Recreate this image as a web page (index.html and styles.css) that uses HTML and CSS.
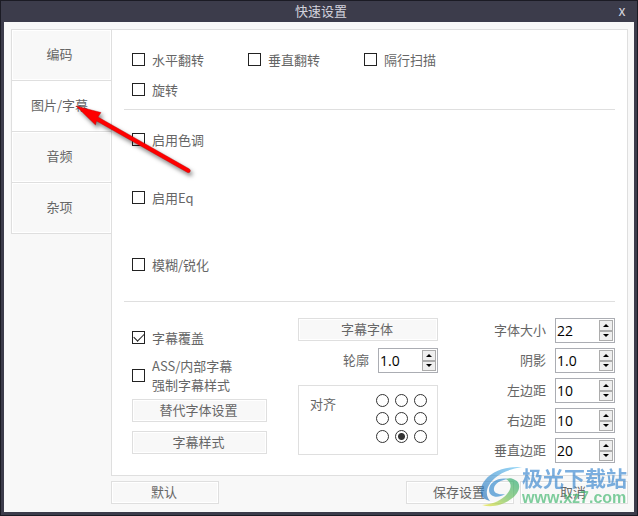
FILE: index.html
```html
<!DOCTYPE html>
<html lang="zh-CN">
<head>
<meta charset="utf-8">
<meta name="viewport" content="width=device-width, initial-scale=1">
<title>快速设置</title>
<link rel="stylesheet" href="styles.css">
</head>
<body>
<div class="window">
  <header class="titlebar">
    <h1 class="title">快速设置</h1>
    <button class="close" type="button">x</button>
  </header>
  <form class="content">
    <nav class="tabs">
      <button class="tab" type="button">编码</button>
      <button class="tab active" type="button">图片/字幕</button>
      <button class="tab" type="button">音频</button>
      <button class="tab" type="button">杂项</button>
    </nav>
    <main class="panel">
      <section class="group transform">
        <label class="check"><input type="checkbox"><span>水平翻转</span></label>
        <label class="check"><input type="checkbox"><span>垂直翻转</span></label>
        <label class="check"><input type="checkbox"><span>隔行扫描</span></label>
        <label class="check"><input type="checkbox"><span>旋转</span></label>
      </section>
      <section class="group filters">
        <label class="check"><input type="checkbox"><span>启用色调</span></label>
        <label class="check"><input type="checkbox"><span>启用Eq</span></label>
        <label class="check"><input type="checkbox"><span>模糊/锐化</span></label>
      </section>
      <section class="subtitles">
        <div class="column options">
          <label class="check"><input type="checkbox" checked><span>字幕覆盖</span></label>
          <label class="check"><input type="checkbox"><span>ASS/内部字幕<br>强制字幕样式</span></label>
          <button class="btn" type="button">替代字体设置</button>
          <button class="btn" type="button">字幕样式</button>
        </div>
        <div class="column font">
          <button class="btn" type="button">字幕字体</button>
          <div class="field">
            <label for="outline">轮廓</label>
            <div class="spinner"><input id="outline" type="number" step="0.1" value="1.0"><div class="steps"><button class="step up" type="button"></button><button class="step down" type="button"></button></div></div>
          </div>
          <fieldset class="align">
            <span class="align-label" id="align-label">对齐</span>
            <div class="radios" role="radiogroup" aria-labelledby="align-label">
              <input type="radio" name="align" aria-label="左上"><input type="radio" name="align" aria-label="上"><input type="radio" name="align" aria-label="右上">
              <input type="radio" name="align" aria-label="左"><input type="radio" name="align" aria-label="中"><input type="radio" name="align" aria-label="右">
              <input type="radio" name="align" aria-label="左下"><input type="radio" name="align" aria-label="下" checked><input type="radio" name="align" aria-label="右下">
            </div>
          </fieldset>
        </div>
        <div class="column metrics">
          <div class="field">
            <label for="size">字体大小</label>
            <div class="spinner"><input id="size" type="number" value="22"><div class="steps"><button class="step up" type="button"></button><button class="step down" type="button"></button></div></div>
          </div>
          <div class="field">
            <label for="shadow">阴影</label>
            <div class="spinner"><input id="shadow" type="number" step="0.1" value="1.0"><div class="steps"><button class="step up" type="button"></button><button class="step down" type="button"></button></div></div>
          </div>
          <div class="field">
            <label for="left">左边距</label>
            <div class="spinner"><input id="left" type="number" value="10"><div class="steps"><button class="step up" type="button"></button><button class="step down" type="button"></button></div></div>
          </div>
          <div class="field">
            <label for="right">右边距</label>
            <div class="spinner"><input id="right" type="number" value="10"><div class="steps"><button class="step up" type="button"></button><button class="step down" type="button"></button></div></div>
          </div>
          <div class="field">
            <label for="vertical">垂直边距</label>
            <div class="spinner"><input id="vertical" type="number" value="20"><div class="steps"><button class="step up" type="button"></button><button class="step down" type="button"></button></div></div>
          </div>
        </div>
      </section>
    </main>
    <footer class="actions">
      <button class="btn reset" type="button">默认</button>
      <button class="btn" type="button">保存设置</button>
      <button class="btn" type="button">取消</button>
    </footer>
  </form>

  <svg class="pointer" width="130" height="90" viewBox="0 0 130 90" aria-hidden="true">
    <path d="M6 12 31 18.500 28 23 119.500 75Q121 76.500 120 78Q119 79 117.500 78.500L26.500 27 25.500 31Z" fill="#fe0000" stroke="#b00808" stroke-width=".4"/>
  </svg>

  <div class="watermark">
    <svg class="mark" width="42" height="42" viewBox="4 3 42 42" aria-hidden="true">
      <defs>
        <linearGradient id="blue" x1="0" y1="1" x2="1" y2="0"><stop offset="0" stop-color="#1c68b4"/><stop offset="1" stop-color="#62c4f4"/></linearGradient>
        <linearGradient id="green" x1="0" y1="1" x2="1" y2="0"><stop offset="0" stop-color="#f0e428"/><stop offset=".5" stop-color="#67bd55"/><stop offset="1" stop-color="#18a36d"/></linearGradient>
      </defs>
      <path d="M46 4C30 3 14 8 7 20C2 29 5 36 14 38C8 31 11 22 19 15C26 9 35 6 46 4Z" fill="url(#blue)"/>
      <path d="M32 16C23 14 13 19 13 27C13 34 22 36 29 31C22 32 17 30 18 25C19 20 25 17 32 16Z" fill="#2d86cc"/>
      <path d="M39 17C46 20 44 30 35 36C27 42 16 45 6 42C18 41 26 37 31 31C36 25 36 20 30 16C33 15 36 15 39 17Z" fill="url(#green)"/>
    </svg>
    <div class="brand">
      <span class="brand-name">极光下载站</span>
      <span class="brand-url">www.xz7.com</span>
    </div>
  </div>
</div>
</body>
</html>
```
FILE: styles.css
```css
:root {
  --frame: #3c3c4b;
  --edge: #1b1b24;
  --line: #dfdfdf;
  --surface: #f8f8f8;
  --text: #666;
}

* { box-sizing: border-box; }

body {
  margin: 0;
  font: 13px/19px "Noto Sans CJK SC", sans-serif;
  color: var(--text);
}

button, input { font: inherit; color: inherit; margin: 0; padding: 0; }

.window {
  position: relative;
  display: flex;
  flex-direction: column;
  min-height: 100vh;
  padding: 0 3px 3px;
  border: 1px solid var(--edge);
  background: var(--frame);
}

.titlebar {
  display: grid;
  grid-template-columns: 24px 1fr 24px;
  align-items: center;
  height: 21px;
  padding-bottom: 2px;
  color: #d2d2dc;
}

.title {
  grid-column: 2;
  margin: 0;
  padding-left: 4px;
  font-size: 13px;
  font-weight: 400;
  text-align: center;
}

.close { border: 0; background: none; font-size: 14px; }

.content {
  flex: 1;
  display: grid;
  grid-template-columns: 100px 1fr;
  grid-template-rows: 1fr auto;
  row-gap: 5px;
  padding: 7px 6px 8px 7px;
  background: var(--surface);
}

.tabs { display: flex; flex-direction: column; }

.tab {
  height: 51px;
  padding: 0 4px 4px 0;
  border: solid var(--line);
  border-width: 1px 0 0 1px;
  background: var(--surface);
  box-shadow: inset 0 0 0 1px #fff;
}

.tab.active { background: #fff; }
.tab:last-child { height: 52px; border-bottom-width: 1px; }

.panel {
  display: flex;
  flex-direction: column;
  border: 1px solid var(--line);
  padding: 0 12px;
  background: #fff;
}

.group { padding: 14px 8px 5px; border-bottom: 1px solid var(--line); }

.transform {
  display: grid;
  grid-template-columns: repeat(3, 116px);
}

.filters {
  display: grid;
  grid-template-rows: 58px 67px 30px;
  align-items: start;
  padding-bottom: 22px;
}

.check {
  display: flex;
  align-items: center;
  gap: 7px;
  min-height: 30px;
}

.check input {
  appearance: none;
  display: grid;
  place-items: center;
  width: 13px;
  height: 13px;
  border: 1px solid #222;
  background: #fff;
}

.check input:checked::before {
  content: "";
  width: 9px;
  height: 5px;
  border: solid #222;
  border-width: 0 0 1px 1px;
  transform: translateY(-1px) rotate(-45deg);
}

.btn {
  height: 23px;
  padding: 0 2px 2px 0;
  border: 1px solid var(--line);
  background: var(--surface);
  box-shadow: inset 0 0 0 1px #fff;
}

.subtitles {
  flex: 1;
  display: grid;
  grid-template-columns: 135px 140px 1fr;
  column-gap: 31px;
  padding: 16px 0 10px 8px;
}

.column { display: flex; flex-direction: column; }

.options { gap: 9px; }
.options .check { min-height: 38px; }
.options .check + .check { margin: -9px 0 -4px; }

.font { gap: 7px; }

.field {
  display: flex;
  align-items: center;
  justify-content: flex-end;
  gap: 9px;
}

.field label { padding-bottom: 3px; }

.metrics { gap: 5px; }

.spinner {
  display: flex;
  width: 60px;
  height: 25px;
  padding: 1px;
  border: 1px solid #abadb3;
  background: #fff;
}

.spinner input {
  appearance: textfield;
  flex: 1;
  min-width: 0;
  border: 0;
  outline: 0;
  background: none;
  font: 14px/21px "Open Sans", "Noto Sans", sans-serif;
  color: #000;
}

.spinner input::-webkit-inner-spin-button { appearance: none; margin: 0; }

.steps { display: grid; width: 14px; grid-template-rows: 1fr 1fr; }

.step {
  display: grid;
  place-items: center;
  border: 1px solid #acacac;
  background: #efefef;
}

.step::before {
  content: "";
  border: solid transparent;
  border-width: 0 3px;
}

.up::before { border-bottom: 3px solid #000; }
.down::before { border-top: 3px solid #000; }

.align {
  display: flex;
  justify-content: space-between;
  min-width: 0;
  height: 70px;
  margin: 5px 0 0;
  padding: 8px 10px 0 11px;
  border: 1px solid var(--line);
}

.radios {
  display: grid;
  grid-template-columns: repeat(3, 13px);
  grid-template-rows: repeat(3, 13px);
  gap: 5px 6px;
}

.radios input {
  appearance: none;
  width: 13px;
  height: 13px;
  border: 1px solid #333;
  border-radius: 50%;
  background: #fff;
}

.radios input:checked { background: radial-gradient(circle, #333 3px, #fff 4px); }

.actions {
  grid-column: 2;
  display: flex;
  gap: 6px;
}

.actions .btn { width: 108px; }
.actions .reset { margin-right: auto; }

.pointer {
  position: absolute;
  left: 69px;
  top: 93px;
  filter: drop-shadow(2px 3px 2px rgba(0, 0, 0, .5));
  pointer-events: none;
}

.watermark {
  position: absolute;
  right: 10px;
  bottom: 7px;
  display: flex;
  align-items: center;
  opacity: .65;
  pointer-events: none;
}

.brand { display: flex; flex-direction: column; }

.brand-name {
  font-size: 21px;
  font-weight: 700;
  line-height: 22px;
  color: #3584ce;
}

.brand-url {
  font: 700 16px/20px "Liberation Sans", sans-serif;
  color: #3cb56b;
}
```
